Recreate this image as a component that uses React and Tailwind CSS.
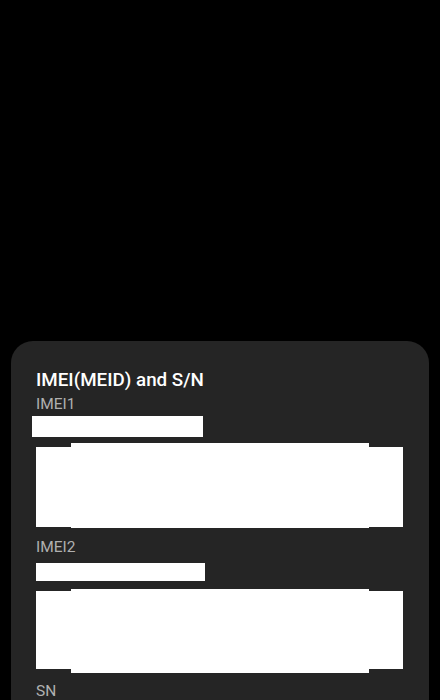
const Barcode = ({ sideTop, sideH, midH }) => (
    <div className="flex items-start ml-[25px] w-[367px]">
        <div className="w-[35px] bg-white" style={{ marginTop: sideTop, height: sideH }} />
        <div className="w-[298px] bg-white" style={{ height: midH }} />
        <div className="w-[34px] bg-white" style={{ marginTop: sideTop, height: sideH }} />
    </div>
);

export default function App() {
    return (
        <div className="h-[700px] w-[440px] overflow-hidden bg-black pt-[341px] px-[11px] font-['Roboto','Liberation_Sans',sans-serif]">
            <div className="h-[400px] rounded-t-[22px] bg-[#252525] pt-[27px]">
                <div className="pl-[25px] text-[18.8px] leading-[24px] font-medium text-white">IMEI(MEID) and S/N</div>
                <div className="mt-[2px] pl-[25px] text-[15.5px] leading-[20px] text-[#b0b0b0]">IMEI1</div>
                <div className="mt-[2px] ml-[21px] h-[21px] w-[171px] bg-white" />
                <div className="mt-[6px]">
                    <Barcode sideTop={4} sideH={80} midH={85} />
                </div>
                <div className="mt-[9px] pl-[25px] text-[15.5px] leading-[20px] text-[#b0b0b0]">IMEI2</div>
                <div className="mt-[6px] ml-[25px] h-[18px] w-[169px] bg-white" />
                <div className="mt-[8px]">
                    <Barcode sideTop={2} sideH={78} midH={84} />
                </div>
                <div className="mt-[8px] pl-[25px] text-[15.5px] leading-[20px] text-[#b0b0b0]">SN</div>
            </div>
        </div>
    );
}
